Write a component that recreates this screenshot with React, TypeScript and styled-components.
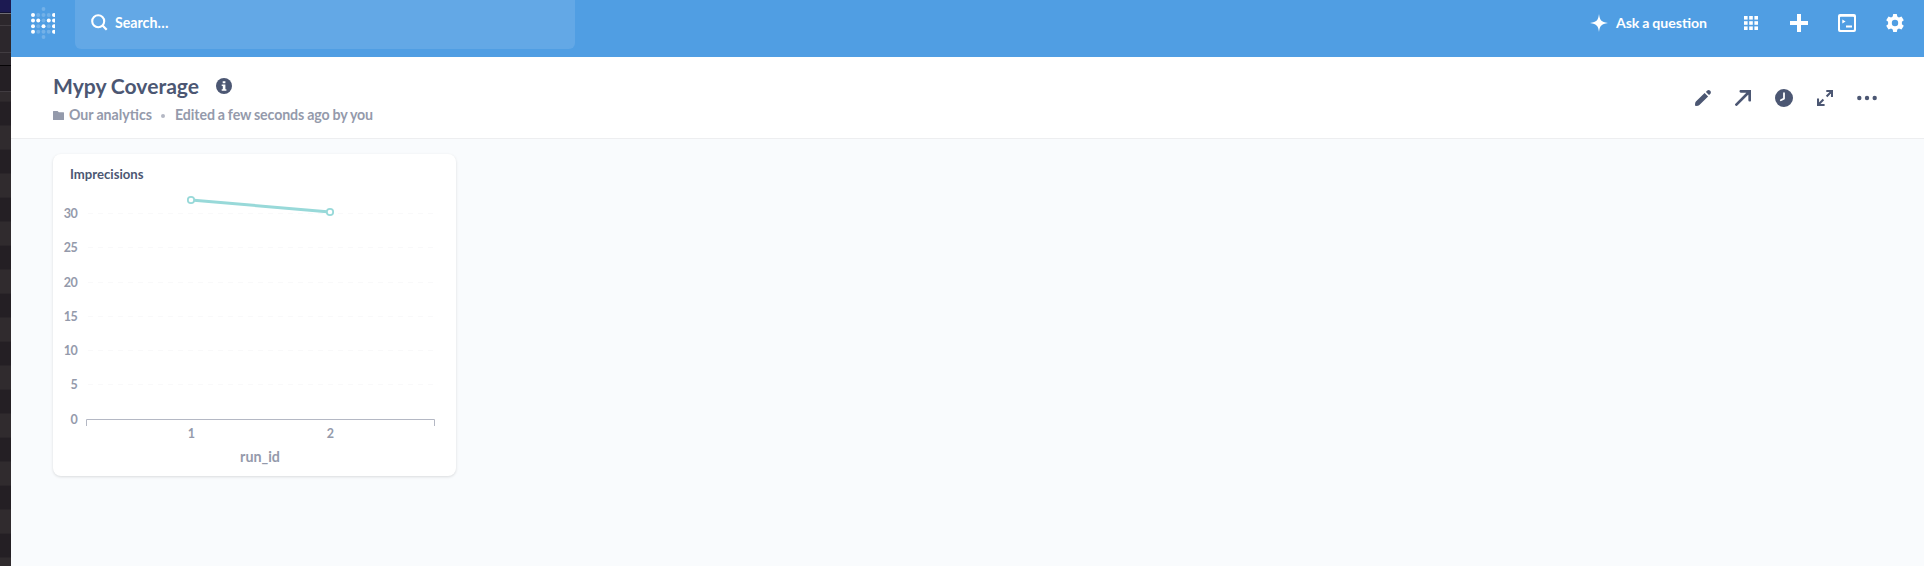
import React from "react";
import styled, { createGlobalStyle } from "styled-components";

const GlobalStyle = createGlobalStyle`
  * { box-sizing: border-box; }
  body {
    margin: 0;
    overflow: hidden;
    font-family: Lato, "Liberation Sans", sans-serif;
    font-weight: 700;
    word-spacing: -0.4px;
    -webkit-font-smoothing: antialiased;
  }
`;

const Screen = styled.div`
  display: flex;
  width: 100%;
  height: 566px;
  overflow: hidden;
`;

const BackgroundWindow = styled.div`
  flex: none;
  width: 11px;
  background:
    linear-gradient(#1c1a52 0 12px, #111030 12px 13px, #6f6d75 13px 14px, #2c272c 14px 25px, #413c41 25px 26px,
      #2c272c 26px 52px, #413c41 52px 53px, #2c272c 53px 65px, #060406 65px 66px, #241f24 66px 91px,
      #413c41 91px 92px, #302b2e 92px 101px, transparent 101px),
    repeating-linear-gradient(#302b2e 0 5px, #2b262a 5px 6px, #241f24 6px 29px, #2a2529 29px 30px, #302b2e 30px 48px) 0 96px;
`;

const Page = styled.div`
  display: flex;
  flex: 1;
  flex-direction: column;
  background: #f9fbfd;
`;

const NavBar = styled.header`
  display: flex;
  flex: none;
  height: 57px;
  padding: 0 20px 0 20px;
  color: #fff;
  background: #509ee3;
`;

const Logo = styled.svg`
  flex: none;
  width: 24px;
  height: 32px;
  margin: 7px 20px 0 0;
`;

const SearchBar = styled.div`
  display: flex;
  width: 500px;
  height: 49px;
  padding: 0 0 4px 16px;
  align-items: center;
  gap: 7px;
  font-size: 14.2px;
  line-height: 18px;
  background: #63a8e6;
  border-radius: 0 0 6px 6px;
`;

const NavActions = styled.nav`
  display: flex;
  height: 46px;
  margin-left: auto;
  align-items: center;
`;

const AskButton = styled.button`
  display: flex;
  align-items: center;
  gap: 8px;
  margin-right: 37px;
  padding: 0;
  color: inherit;
  font: inherit;
  font-size: 14.1px;
  line-height: 18px;
  word-spacing: -0.6px;
  white-space: nowrap;
  background: none;
  border: 0;
`;

const IconButton = styled.button<{ $gap: number }>`
  display: flex;
  margin: 0 0 0 ${(p) => p.$gap}px;
  padding: 0;
  color: inherit;
  background: none;
  border: 0;
`;

const Icon = styled.svg`
  display: block;
  flex: none;
  fill: currentColor;
`;

const DashboardHeader = styled.section`
  display: flex;
  flex: none;
  height: 82px;
  padding: 0 47px 0 42px;
  justify-content: space-between;
  color: #4c5773;
  background: #fff;
  border-bottom: 1px solid #edeef0;
`;

const Heading = styled.div`
  display: flex;
  padding-top: 16px;
  flex-direction: column;
`;

const TitleRow = styled.div`
  display: flex;
  align-items: center;
  gap: 17px;
`;

const Title = styled.h1`
  margin: 0;
  font-size: 21.1px;
  line-height: 26px;
  font-weight: 700;
`;

const Meta = styled.div`
  display: flex;
  margin-top: 7px;
  align-items: center;
  color: #949aab;
  font-size: 14.2px;
  line-height: 18px;
  white-space: nowrap;
`;

const Collection = styled.span`
  display: flex;
  align-items: center;
  gap: 5px;
`;

const EditedLabel = styled.span`
  letter-spacing: -0.1px;
`;

const Separator = styled.span`
  width: 4px;
  height: 4px;
  margin: 1px 10px 0 9px;
  background: #b4b8c4;
  border-radius: 50%;
`;

const HeaderActions = styled.div`
  display: flex;
  height: 82px;
  align-items: center;
`;

const Grid = styled.main`
  padding: 15px 42px;
`;

const Card = styled.article`
  width: 403px;
  height: 322px;
  overflow: hidden;
  background: #fff;
  border-radius: 8px;
  box-shadow: 0 1px 3px rgba(0, 0, 0, 0.13);
`;

const CardTitle = styled.h2`
  height: 32px;
  margin: 0;
  padding: 12px 17px 0;
  color: #4c5773;
  font-size: 13.15px;
  line-height: 16px;
  font-weight: 700;
`;

const Chart = styled.svg`
  display: block;
  font-family: Lato, "Liberation Sans", sans-serif;
  font-weight: 700;
`;

const TickLabel = styled.text`
  font-size: 12.5px;
  letter-spacing: -0.5px;
  fill: #949aab;
`;

const dots = [
  [1, 0, 0, 0, 1],
  [1, 1, 0, 1, 1],
  [1, 0, 1, 0, 1],
  [1, 0, 0, 0, 1],
];

const yTicks = [
  { value: 30, y: 27.5 },
  { value: 25, y: 61.5 },
  { value: 20, y: 96.5 },
  { value: 15, y: 130.5 },
  { value: 10, y: 164.5 },
  { value: 5, y: 198.5 },
  { value: 0, y: 233.5 },
];

const points = [
  { label: "1", x: 138, y: 14 },
  { label: "2", x: 277, y: 26 },
];

function BrandLogo() {
  return (
    <Logo viewBox="31 7 24 32" fill="#fff">
      <circle cx="43.5" cy="9" r="1.9" opacity="0.2" />
      {dots.map((row, r) =>
        row.map((on, c) => (
          <circle key={`${r}-${c}`} cx={33 + c * 5.25} cy={15 + r * 5.6} r="2" opacity={on ? 1 : 0.2} />
        )),
      )}
      <circle cx="43.5" cy="37" r="1.9" opacity="0.2" />
    </Logo>
  );
}

function ImprecisionsChart() {
  return (
    <Chart width="403" height="290" viewBox="0 0 403 290">
      {yTicks.map(({ value, y }) => (
        <g key={value}>
          {value > 0 && <path d={`M35 ${y}H380`} stroke="#f9f9fa" strokeDasharray="5 5" />}
          <TickLabel x="24.2" y={y + 4.5} textAnchor="end">
            {value}
          </TickLabel>
        </g>
      ))}
      <path d="M33.5 240V233.5H381.5V240" fill="none" stroke="#b4b8c4" />
      <path d="M138 14L277 26" stroke="#98d9d9" strokeWidth="3" />
      {points.map(({ label, x, y }) => (
        <g key={label}>
          <circle cx={x} cy={y} r="3.2" fill="#fff" stroke="#98d9d9" strokeWidth="1.8" />
          <TickLabel x={x} y="252" textAnchor="middle">
            {label}
          </TickLabel>
        </g>
      ))}
      <text x="207" y="276" textAnchor="middle" fontSize="14.3" fill="#949aab">
        run_id
      </text>
    </Chart>
  );
}

export default function App() {
  return (
    <>
      <GlobalStyle />
      <Screen>
        <BackgroundWindow />
        <Page>
          <NavBar>
            <BrandLogo />
            <SearchBar>
              <Icon width="17" height="17" viewBox="0 0 17 17">
                <circle cx="7.2" cy="7.2" r="6" fill="none" stroke="currentColor" strokeWidth="2.1" />
                <path d="M11.5 11.5L15.7 15.7" stroke="currentColor" strokeWidth="2.3" />
              </Icon>
              Search…
            </SearchBar>
            <NavActions>
              <AskButton>
                <Icon width="18" height="18" viewBox="0 0 18 18">
                  <path d="M9 0C9.8 6 11 8 18 9C11 10 9.8 12 9 18C8.2 12 7 10 0 9C7 8 8.2 6 9 0Z" />
                </Icon>
                Ask a question
              </AskButton>
              <IconButton $gap={0} aria-label="Browse data">
                <Icon width="14" height="14" viewBox="0 0 14 14">
                  {[0, 5.2, 10.4].map((y) => [0, 5.2, 10.4].map((x) => <rect key={`${x}-${y}`} x={x} y={y} width="3.6" height="3.6" />))}
                </Icon>
              </IconButton>
              <IconButton $gap={32} aria-label="Create">
                <Icon width="18" height="18" viewBox="0 0 18 18">
                  <path d="M7 0H11V7H18V11H11V18H7V11H0V7H7Z" />
                </Icon>
              </IconButton>
              <IconButton $gap={30} aria-label="Write SQL">
                <Icon width="18" height="18" viewBox="0 0 18 18">
                  <path
                    fillRule="evenodd"
                    d="M2 0H16A2 2 0 0 1 18 2V16A2 2 0 0 1 16 18H2A2 2 0 0 1 0 16V2A2 2 0 0 1 2 0ZM2 3.6V15.2Q2 16 2.8 16H15.2Q16 16 16 15.2V3.6Q16 2.8 15.2 2.8H2.8Q2 2.8 2 3.6ZM4.3 5.4L7.6 7.4L4.3 9.4ZM8 11.5H14V13.5H8Z"
                  />
                </Icon>
              </IconButton>
              <IconButton $gap={30} aria-label="Settings">
                <Icon width="18" height="18" viewBox="0 0 18 18">
                  <path
                    fillRule="evenodd"
                    d="M7.2 0H10.8L11.3 2.5L12.9 3.4L15.5 2.6L17.8 6.2L15.9 7.8V10.2L17.8 11.8L15.5 15.4L12.9 14.6L11.3 15.5L10.8 18H7.2L6.7 15.5L5.1 14.6L2.5 15.4L0.2 11.8L2.1 10.2V7.8L0.2 6.2L2.5 2.6L5.1 3.4L6.7 2.5ZM9 5.8A3.2 3.2 0 1 0 9 12.2A3.2 3.2 0 1 0 9 5.8Z"
                  />
                </Icon>
              </IconButton>
            </NavActions>
          </NavBar>
          <DashboardHeader>
            <Heading>
              <TitleRow>
                <Title>Mypy Coverage</Title>
                <Icon width="16" height="16" viewBox="0 0 16 16">
                  <circle cx="8" cy="8" r="8" />
                  <path d="M6.7 3.2H9.4V5.3H6.7ZM5.7 6.5H9.4V11.2H10.4V12.8H5.7V11.2H6.8V8.1H5.7Z" fill="#fff" />
                </Icon>
              </TitleRow>
              <Meta>
                <Collection>
                  <Icon width="11" height="9" viewBox="0 0 11 9">
                    <path d="M.5 0H4.6L5.8 1.2H10.5Q11 1.2 11 1.7V8.5Q11 9 10.5 9H.5Q0 9 0 8.5V.5Q0 0 .5 0Z" />
                  </Icon>
                  Our analytics
                </Collection>
                <Separator />
                <EditedLabel>Edited a few seconds ago by you</EditedLabel>
              </Meta>
            </Heading>
            <HeaderActions>
              <IconButton $gap={0} aria-label="Edit dashboard">
                <Icon width="16" height="16" viewBox="0 0 16 16">
                  <path d="M9.6 2.9L13.1 6.4L4.4 15.1Q3.6 16 1 16Q0 16 0 15Q0 12.5.9 11.6Z" />
                  <path d="M10.9 2L12 .8Q13.6-.6 15.2.8Q16.6 2.4 15.2 4L14 5.1Z" />
                </Icon>
              </IconButton>
              <IconButton $gap={24} aria-label="Share">
                <Icon width="16" height="16" viewBox="0 0 16 16">
                  <path d="M1.4 14.6L14 2M5.8 1.3H14.7V10.2" fill="none" stroke="currentColor" strokeWidth="2.7" strokeLinecap="round" strokeLinejoin="miter" />
                </Icon>
              </IconButton>
              <IconButton $gap={24} aria-label="History">
                <Icon width="18" height="18" viewBox="0 0 18 18">
                  <circle cx="9" cy="9" r="9" />
                  <path d="M9 4.2V9.6L5.8 11.2" fill="none" stroke="#fff" strokeWidth="1.8" strokeLinecap="round" strokeLinejoin="round" />
                </Icon>
              </IconButton>
              <IconButton $gap={24} aria-label="Fullscreen">
                <Icon width="16" height="16" viewBox="0 0 16 16">
                  <path d="M9.3 1H15V7M15 1L9.6 6.4M1 8.6V15H7.6M1 15L6.4 9.6" fill="none" stroke="currentColor" strokeWidth="2.1" />
                </Icon>
              </IconButton>
              <IconButton $gap={24} aria-label="More">
                <Icon width="20" height="6" viewBox="0 0 20 6">
                  <circle cx="2.3" cy="3" r="2.2" />
                  <circle cx="10" cy="3" r="2.2" />
                  <circle cx="17.7" cy="3" r="2.2" />
                </Icon>
              </IconButton>
            </HeaderActions>
          </DashboardHeader>
          <Grid>
            <Card>
              <CardTitle>Imprecisions</CardTitle>
              <ImprecisionsChart />
            </Card>
          </Grid>
        </Page>
      </Screen>
    </>
  );
}
